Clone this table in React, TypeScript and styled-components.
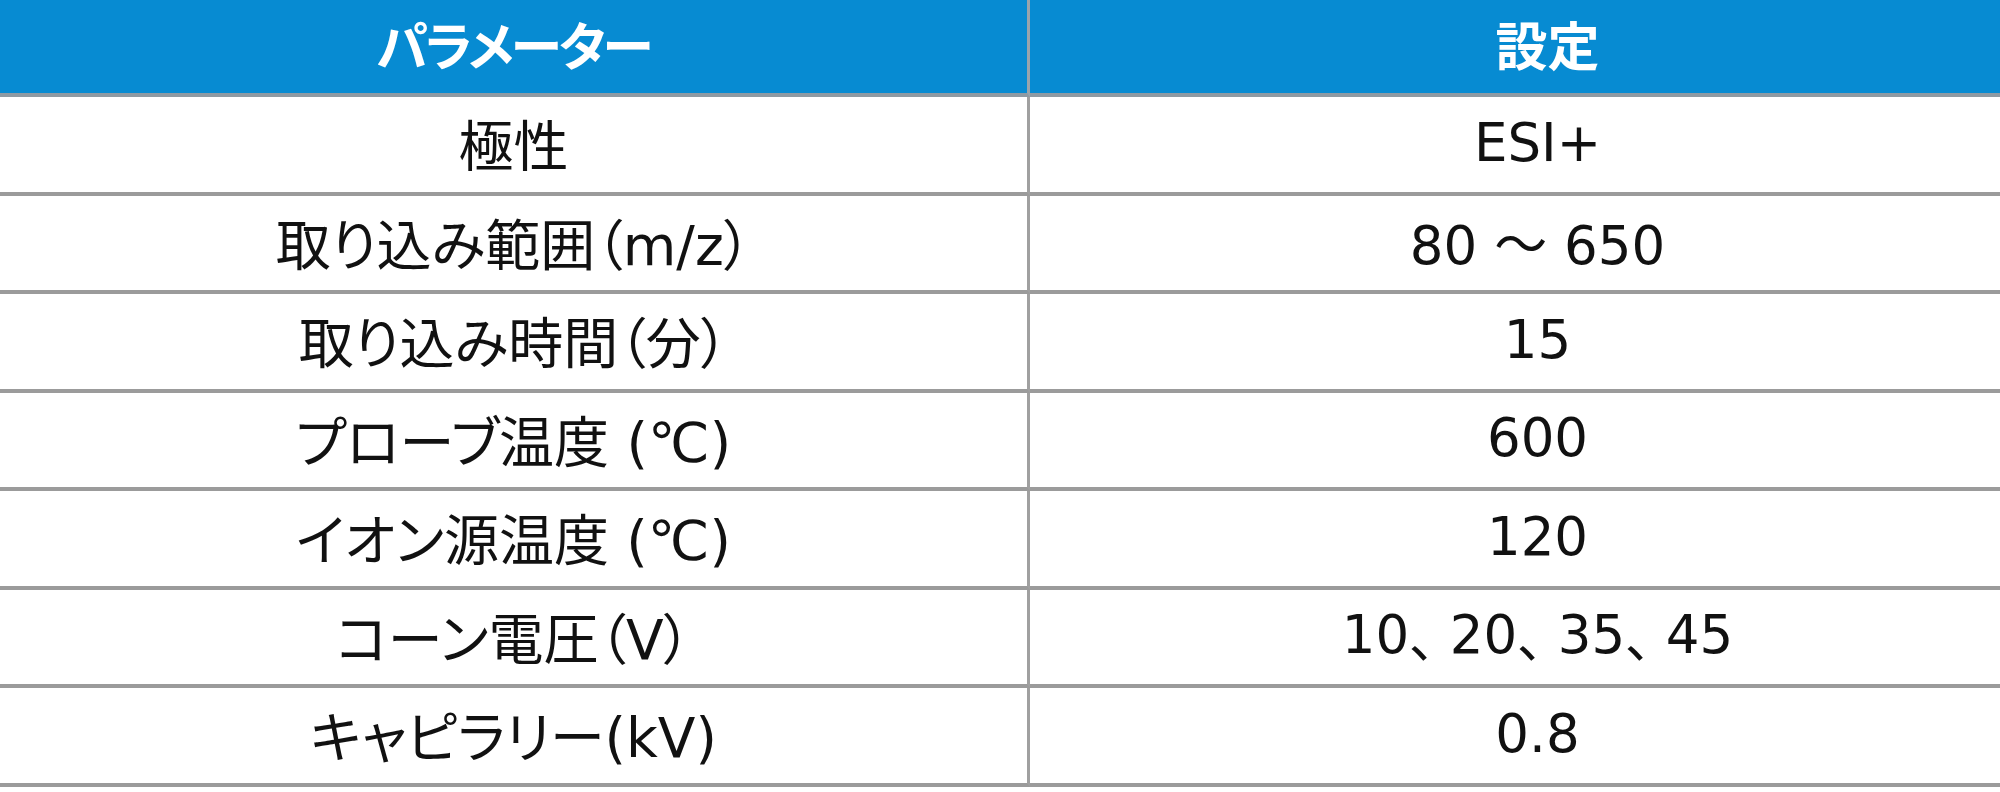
import { Fragment } from 'react';
import styled, { createGlobalStyle } from 'styled-components';

const GlobalStyle = createGlobalStyle`
  html, body {
    margin: 0;
    padding: 0;
    background: #ffffff;
    overflow: hidden;
  }
  body {
    font-family: "DejaVu Sans", "Noto Sans CJK JP", sans-serif;
  }
`;

const rows = [
  { name: '極性', value: 'ESI+' },
  { name: '取り込み範囲（m/z）', value: '80 ～ 650' },
  { name: '取り込み時間（分）', value: '15' },
  { name: 'プローブ温度 (℃)', value: '600' },
  { name: 'イオン源温度 (℃)', value: '120' },
  { name: 'コーン電圧（V）', value: '10、20、35、45' },
  { name: 'キャピラリー(kV)', value: '0.8' },
];

function Value({ text }: { text: string }) {
  const parts = text.split('、');
  return (
    <>
      {parts.map((part, i) => (
        <Fragment key={i}>
          {i > 0 && <Comma>、</Comma>}
          {part}
        </Fragment>
      ))}
    </>
  );
}

export default function App() {
  return (
    <>
      <GlobalStyle />
      <Table>
        <HeadCell $first>パラメーター</HeadCell>
        <HeadCell>設定</HeadCell>
        {rows.map((row) => (
          <Row key={row.name}>
            <Cell $first>{row.name}</Cell>
            <Cell>
              <Value text={row.value} />
            </Cell>
          </Row>
        ))}
      </Table>
    </>
  );
}

// the right column runs a little past the window edge, as in the capture
const Table = styled.div`
  display: grid;
  grid-template-columns: 1030px 1015px;
  grid-template-rows: 97px repeat(7, 98.5px);
  width: 2045px;
`;

const Row = styled.div`
  display: contents;
`;

const HeadCell = styled.div<{ $first?: boolean }>`
  display: flex;
  align-items: center;
  justify-content: center;
  background-color: #078bd2;
  color: #ffffff;
  font-family: "Noto Sans CJK JP", sans-serif;
  font-size: 52px;
  font-weight: 700;
  font-feature-settings: "palt";
  letter-spacing: ${({ $first }) => ($first ? '-3px' : '0')};
  border-bottom: 4px solid #8e9aa3;
  border-right: ${({ $first }) => ($first ? '3px solid #9aa4ab' : 'none')};
  box-sizing: border-box;
  padding: ${({ $first }) => ($first ? '0 0 6px 0' : '0 0 6px 20px')};
`;

const Cell = styled.div<{ $first?: boolean }>`
  display: flex;
  align-items: center;
  justify-content: center;
  color: #111111;
  font-size: ${({ $first }) => ($first ? '55px' : '53px')};
  font-feature-settings: ${({ $first }) => ($first ? '"palt"' : 'normal')};
  border-bottom: 4px solid #9b9b9b;
  border-right: ${({ $first }) => ($first ? '3px solid #a0a0a0' : 'none')};
  box-sizing: border-box;
  padding-bottom: 4px;
  white-space: pre;
`;

const Comma = styled.span`
  font-feature-settings: "palt";
  margin-right: 14px;
`;
